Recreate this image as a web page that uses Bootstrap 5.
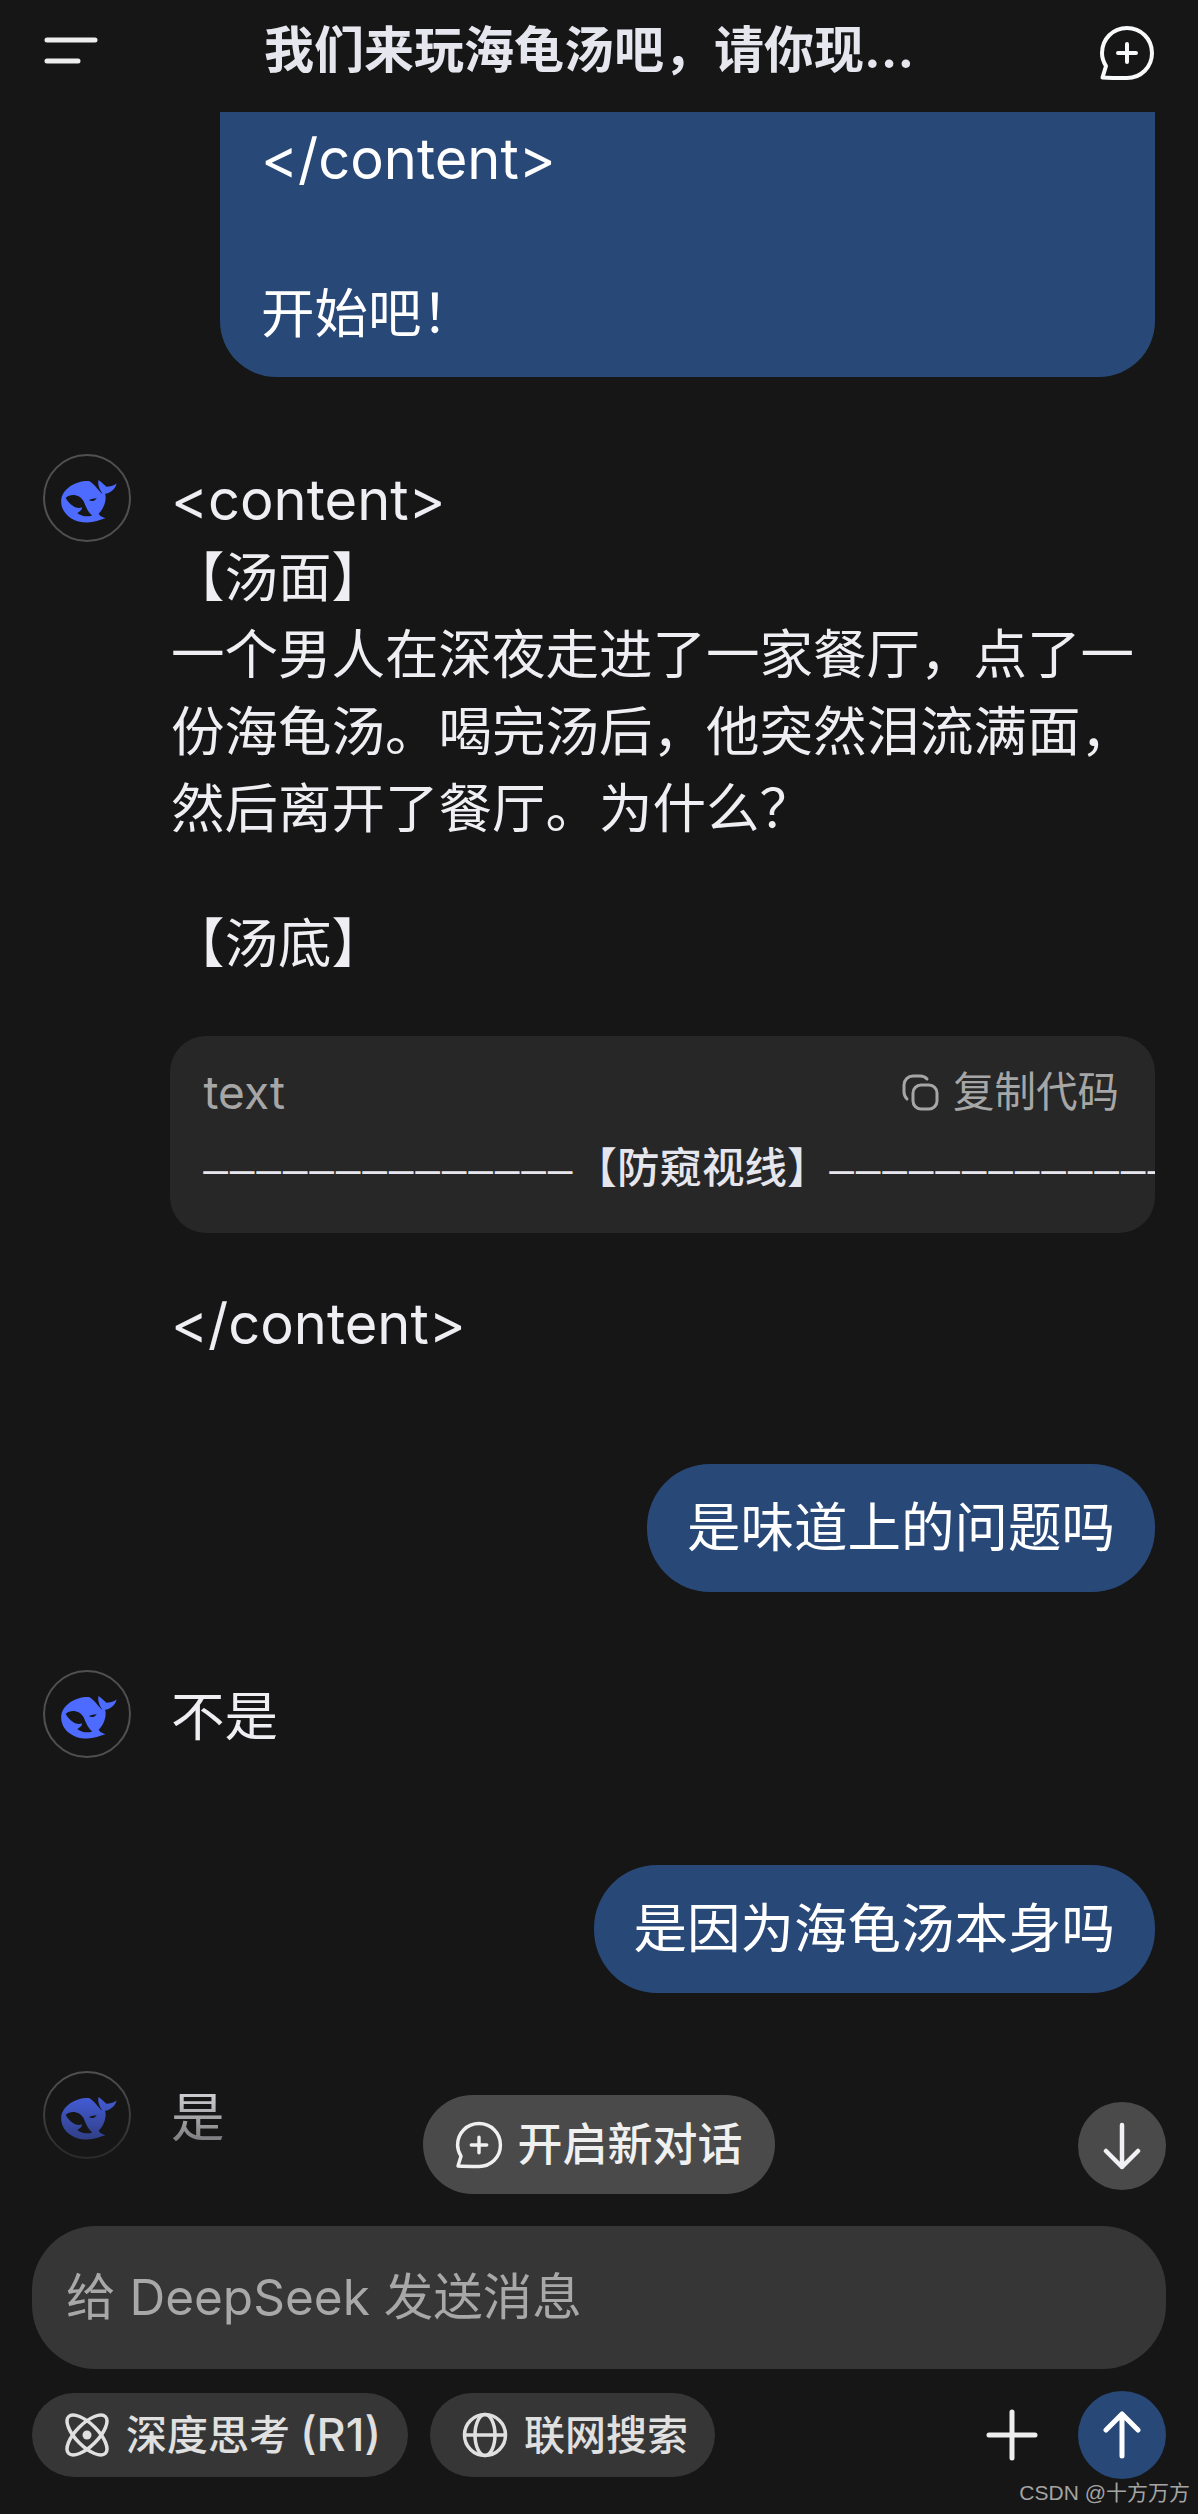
<!DOCTYPE html>
<html lang="zh-CN">
<head>
  <meta charset="UTF-8" />
  <meta name="viewport" content="width=device-width, initial-scale=1.0"/>
  <title>DeepSeek</title>
  <link href="https://cdn.jsdelivr.net/npm/bootstrap@5.3.0/dist/css/bootstrap.min.css" rel="stylesheet" />
  <style>
    body {
      background: #161616;
      color: #eeeef3;
      font-family: Inter, "Noto Sans CJK SC", sans-serif;
      font-size: 53.5px;
      line-height: 77px;
      margin: 0;
    }
    .app-shell { width: 1198px; height: 2514px; overflow: hidden; }
    .top-bar { height: 112px; padding: 0 43px 0 44px; }
    .top-title {
      font-size: 50px;
      line-height: 100px;
      font-weight: 700;
      color: #e6e6ee;
      margin-left: 166px;
      margin-top: -12px;
      white-space: nowrap;
    }
    .burger { width: 54px; height: 36px; margin-top: -12px; }
    .top-ico { margin-top: -6px; }
    .chat-area { padding: 0 43px; height: 2114px; }
    .latin-tag { font-size: 56px; }
    .user-msg {
      background: #284878;
      color: #fff;
      border-radius: 63px;
      padding: 25px 40px 26px;
    }
    .first-msg {
      margin-left: 177px;
      border-radius: 0 0 56px 56px;
      padding: 9px 41px 25px;
      margin-bottom: 77px;
    }
    .ava {
      width: 88px;
      height: 88px;
      border: 2.5px solid #505050;
      border-radius: 50%;
      margin-right: 40px;
      flex: none;
    }
    .ava svg { width: 100%; height: 100%; display: block; }
    .bot-text { padding-top: 8px; min-width: 0; flex: 1; }
    .gap-soup { margin-top: 58px; }
    .code-box {
      background: #272727;
      border-radius: 36px;
      height: 197px;
      margin-top: 54px;
      margin-bottom: 53px;
      margin-left: -1.500px;
      padding: 26px 36px 0 34px;
      overflow: hidden;
    }
    .code-head { font-size: 41.500px; line-height: 60px; color: #a6a6a6; }
    .code-lang { font-size: 46px; }
    .code-line {
      font-size: 42.500px;
      line-height: 60px;
      font-weight: 500;
      color: #e6e6ee;
      white-space: nowrap;
      margin-top: 16px;
      margin-right: -36px;
    }
    .dash {
      font-family: "Liberation Mono", monospace;
      font-size: 40.500px;
      letter-spacing: 2.200px;
    }
    .copy-ico { width: 37px; height: 37px; margin-right: 14px; }
    .msg-a { margin-top: 101px; }
    .msg-b { margin-top: 78px; }
    .msg-c { margin-top: 107px; }
    .msg-d { margin-top: 78px; }
    .fade-bottom {
      left: 0;
      right: 0;
      bottom: 0;
      height: 150px;
      background: linear-gradient(to bottom, rgba(22,22,22,0) 0%, rgba(22,22,22,.55) 45%, #161616 90%);
    }
    .new-chat {
      left: 423px;
      bottom: 32px;
      width: 352px;
      height: 99px;
      background: #4a4a4a;
      color: #f0f0f0;
      font-size: 45px;
      line-height: 99px;
      font-weight: 500;
    }
    .new-chat svg { width: 48px; height: 54px; margin-right: 14px; }
    .round-btn { width: 88px; height: 88px; flex: none; }
    .down-btn { right: 32px; bottom: 36px; background: #4a4a4a; }
    .composer { padding: 0 32px; }
    .input-box {
      height: 143px;
      background: #363636;
      border-radius: 64px;
      color: #a8a8a8;
      font-size: 49.500px;
      padding: 0 34px;
    }
    .tool-row { margin-top: 22px; }
    .chip {
      height: 84px;
      margin-top: 2px;
      background: #363636;
      border-radius: 42px;
      color: #e0e0e0;
      font-size: 41px;
      line-height: 84px;
      font-weight: 500;
      padding: 0 27px 0 32px;
      margin-right: 22px;
    }
    .chip svg { width: 46px; height: 46px; margin-right: 16px; }
    .chip-tag { font-size: 45px; margin-left: 10px; }
    .plus-ico { width: 52px; height: 52px; margin-right: 40px; }
    .send-btn { background: #284878; }
    .watermark {
      right: 8px;
      bottom: 7px;
      font-family: "Liberation Sans", "Noto Sans CJK SC", sans-serif;
      font-size: 21px;
      line-height: 28px;
      color: #a4a4a4;
    }
  </style>
</head>

<body>
<svg width="0" height="0" class="position-absolute">
  <defs>
    <symbol id="whale" viewBox="70 75 260 260">
      <path fill="#4d6bfe" d="M208 153C168 150 122 176 120 214C119 250 152 281 200 281C222 281 240 273 257 268C246 264 238 260 236 254C252 238 262 212 256 192C272 190 287 178 292 160C282 167 270 170 260 170C254 163 245 157 236 149C232 162 238 178 248 192C238 186 226 164 208 153Z"/>
      <path fill="#161616" d="M134 205C150 190 178 194 190 216C197 234 204 250 216 259C200 264 184 262 170 252C180 246 186 240 184 234C172 240 150 232 134 205Z"/>
      <path fill="#161616" d="M206 211C214 206 224 208 230 204C226 214 214 218 206 211Z"/>
    </symbol>
    <symbol id="chat-plus" viewBox="0 0 56 56">
      <path fill="none" stroke="currentColor" stroke-width="4" stroke-linejoin="round" d="M28 3C14 3 3 14 3 28C3 33 4.500 37 7 41L3.500 52.500C12 53 20 53 28 53C42 53 53 42 53 28C53 14 42 3 28 3Z"/>
      <path fill="none" stroke="currentColor" stroke-width="4" stroke-linecap="round" d="M28 19V37M19 28H37"/>
    </symbol>
  </defs>
</svg>

<div class="app-shell d-flex flex-column">
  <!-- Top bar -->
  <header class="top-bar d-flex align-items-center flex-shrink-0">
    <svg class="burger flex-shrink-0" viewBox="0 0 54 36">
      <path fill="none" stroke="#eee" stroke-width="5" stroke-linecap="round" d="M3 8H51M3 29H34"/>
    </svg>
    <div class="top-title flex-grow-1">我们来玩海龟汤吧，请你现...</div>
    <svg width="56" height="56" class="top-ico flex-shrink-0 text-light"><use href="#chat-plus"/></svg>
  </header>

  <!-- Messages -->
  <main class="chat-area position-relative">
    <div class="user-msg first-msg"><span class="latin-tag">&lt;/content&gt;</span><br><br>开始吧！</div>

    <div class="d-flex">
      <div class="ava"><svg><use href="#whale"/></svg></div>
      <div class="bot-text">
        <div class="latin-tag">&lt;content&gt;</div>
        <div>【汤面】</div>
        <div>一个男人在深夜走进了一家餐厅，点了一份海龟汤。喝完汤后，他突然泪流满面，然后离开了餐厅。为什么？</div>
        <div class="gap-soup">【汤底】</div>
        <div class="code-box">
          <div class="code-head d-flex justify-content-between align-items-center">
            <span class="code-lang">text</span>
            <span class="d-flex align-items-center">
              <svg class="copy-ico" viewBox="0 0 37 37" fill="none" stroke="#a6a6a6" stroke-width="3" stroke-linecap="round">
                <rect x="11" y="11" width="24" height="24" rx="8"/>
                <path d="M25 5C23 2.500 21 2 18 2H11C6 2 2 6 2 11V18C2 21 3 23 5 25"/>
              </svg>
              复制代码
            </span>
          </div>
          <div class="code-line"><span class="dash">——————————————</span>【防窥视线】<span class="dash">——————————————</span></div>
        </div>
        <div class="latin-tag">&lt;/content&gt;</div>
      </div>
    </div>

    <div class="d-flex justify-content-end msg-a">
      <div class="user-msg">是味道上的问题吗</div>
    </div>

    <div class="d-flex msg-b">
      <div class="ava"><svg><use href="#whale"/></svg></div>
      <div class="bot-text">不是</div>
    </div>

    <div class="d-flex justify-content-end msg-c">
      <div class="user-msg">是因为海龟汤本身吗</div>
    </div>

    <div class="d-flex msg-d">
      <div class="ava"><svg><use href="#whale"/></svg></div>
      <div class="bot-text">是</div>
    </div>

    <div class="fade-bottom position-absolute"></div>

    <div class="new-chat position-absolute rounded-pill d-flex align-items-center justify-content-center">
      <svg><use href="#chat-plus"/></svg>开启新对话
    </div>
    <div class="down-btn round-btn position-absolute rounded-circle d-flex align-items-center justify-content-center">
      <svg width="40" height="48" viewBox="0 0 40 48" fill="none" stroke="#f0f0f5" stroke-width="4.500" stroke-linecap="round" stroke-linejoin="round">
        <path d="M20 3V45M4 29L20 45L36 29"/>
      </svg>
    </div>
  </main>

  <!-- Composer -->
  <footer class="composer flex-shrink-0">
    <div class="input-box d-flex align-items-center">给 DeepSeek 发送消息</div>
    <div class="tool-row d-flex align-items-start">
      <div class="chip d-flex align-items-center">
        <svg viewBox="0 0 46 46" fill="none" stroke="#e0e0e0" stroke-width="3.500">
          <ellipse cx="23" cy="23" rx="26" ry="11" transform="rotate(45 23 23)"/>
          <ellipse cx="23" cy="23" rx="26" ry="11" transform="rotate(-45 23 23)"/>
          <circle cx="23" cy="23" r="4.500" fill="#e0e0e0" stroke="none"/>
        </svg>
        深度思考<span class="chip-tag">(R1)</span>
      </div>
      <div class="chip d-flex align-items-center">
        <svg viewBox="0 0 46 46" fill="none" stroke="#e0e0e0" stroke-width="3.500">
          <circle cx="23" cy="23" r="20.500"/>
          <ellipse cx="23" cy="23" rx="10" ry="20.500"/>
          <path d="M3 23H43"/>
        </svg>
        联网搜索
      </div>
      <div class="ms-auto d-flex align-items-center">
        <svg class="plus-ico" viewBox="0 0 52 52" fill="none" stroke="#eee" stroke-width="5" stroke-linecap="round">
          <path d="M26 3V49M3 26H49"/>
        </svg>
        <div class="send-btn round-btn rounded-circle d-flex align-items-center justify-content-center">
          <svg width="40" height="48" viewBox="0 0 40 48" fill="none" stroke="#fff" stroke-width="5" stroke-linecap="round" stroke-linejoin="round">
            <path d="M20 45V3M4 19L20 3L36 19"/>
          </svg>
        </div>
      </div>
    </div>
  </footer>
</div>

<div class="watermark position-absolute">CSDN @十方万方</div>

<script src="https://cdn.jsdelivr.net/npm/bootstrap@5.3.0/dist/js/bootstrap.bundle.min.js"></script>
</body>
</html>
